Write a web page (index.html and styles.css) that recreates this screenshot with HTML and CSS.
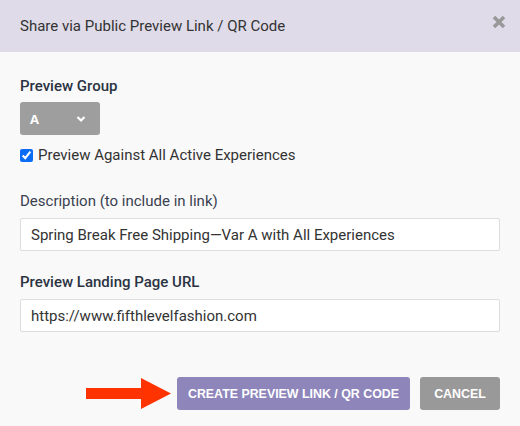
FILE: index.html
```html
<!DOCTYPE html>
<html>
<head>
<meta charset="utf-8">
<link rel="stylesheet" href="styles.css">
</head>
<body>
<div class="modal">
  <div class="header">
    <span class="title">Share via Public Preview Link / QR Code</span>
    <svg class="close" width="14" height="14" viewBox="0 0 14 14"><path d="M2 2 L12 12 M12 2 L2 12" stroke="#999" stroke-width="3.6" stroke-linecap="butt"/></svg>
  </div>
  <div class="body">
    <div class="label">Preview Group</div>
    <div class="select"><span>A</span><svg width="10" height="8" viewBox="0 0 10 8"><path d="M1.5 2 L5 5.5 L8.5 2" stroke="#fff" stroke-width="2.2" fill="none"/></svg></div>
    <label class="check"><input type="checkbox" checked> Preview Against All Active Experiences</label>
    <div class="label light">Description (to include in link)</div>
    <div class="input">Spring Break Free Shipping—Var A with All Experiences</div>
    <div class="label url">Preview Landing Page URL</div>
    <div class="input">https://www.fifthlevelfashion.com</div>
    <div class="footer">
      <svg class="arrow" width="86" height="32" viewBox="0 0 86 32"><path d="M0 10 H55 V0 L85 15.5 L55 31 V21 H0 Z" fill="#ff3300"/></svg>
      <div class="btn primary">CREATE PREVIEW LINK / QR CODE</div>
      <div class="btn secondary">CANCEL</div>
    </div>
  </div>
</div>
</body>
</html>
```
FILE: styles.css
```css
html, body { margin: 0; padding: 0; }
body { background: #f9f9f9; font-family: Roboto, "Liberation Sans", sans-serif; width: 520px; height: 426px; overflow: hidden; }
.modal { display: flex; flex-direction: column; }
.header { height: 52px; background: #dfdbe8; display: flex; align-items: center; justify-content: space-between; padding: 0 14px 0 20px; }
.title { font-size: 15px; color: #333; margin-top: -1px; }
.close { margin-top: -8px; }
.body { padding: 24px 20px 0 20px; display: flex; flex-direction: column; }
.label { font-size: 15px; color: #2b3342; font-weight: 500; line-height: 20px; }
.label.light { font-weight: 400; color: #3a4150; margin-top: 27px; }
.label.url { margin-top: 21px; }
.select { margin-top: 6px; width: 80px; height: 33px; box-sizing: border-box; background: #9e9e9e; border-radius: 3px; display: flex; align-items: center; justify-content: space-between; padding: 0 14px 0 10px; color: #fff; font-family: "Open Sans", sans-serif; font-weight: 700; font-size: 13px; }
.select svg { margin-top: 1px; }
.check { margin-top: 11px; display: flex; align-items: center; font-size: 15px; color: #333; line-height: 18px; }
.check input { margin: 0 5px 0 0; width: 13px; height: 13px; accent-color: #0b6cf5; }
.input { margin-top: 7px; height: 33px; box-sizing: border-box; border: 1px solid #ddd; background: #fff; border-radius: 2px; padding: 0 10px; display: flex; align-items: center; font-size: 15px; color: #333; }
.url + .input { margin-top: 7px; }
.footer { display: flex; justify-content: flex-end; align-items: center; margin-top: 45px; gap: 10px; }
.arrow { margin-right: -5px; }
.btn { height: 33px; border-radius: 3px; color: #fff; font-family: "Liberation Sans", Arial, sans-serif; font-weight: 700; font-size: 12.4px; display: flex; align-items: center; justify-content: center; }
.primary { background: #8e85bb; width: 233px; }
.secondary { background: #999; width: 80px; }
```
